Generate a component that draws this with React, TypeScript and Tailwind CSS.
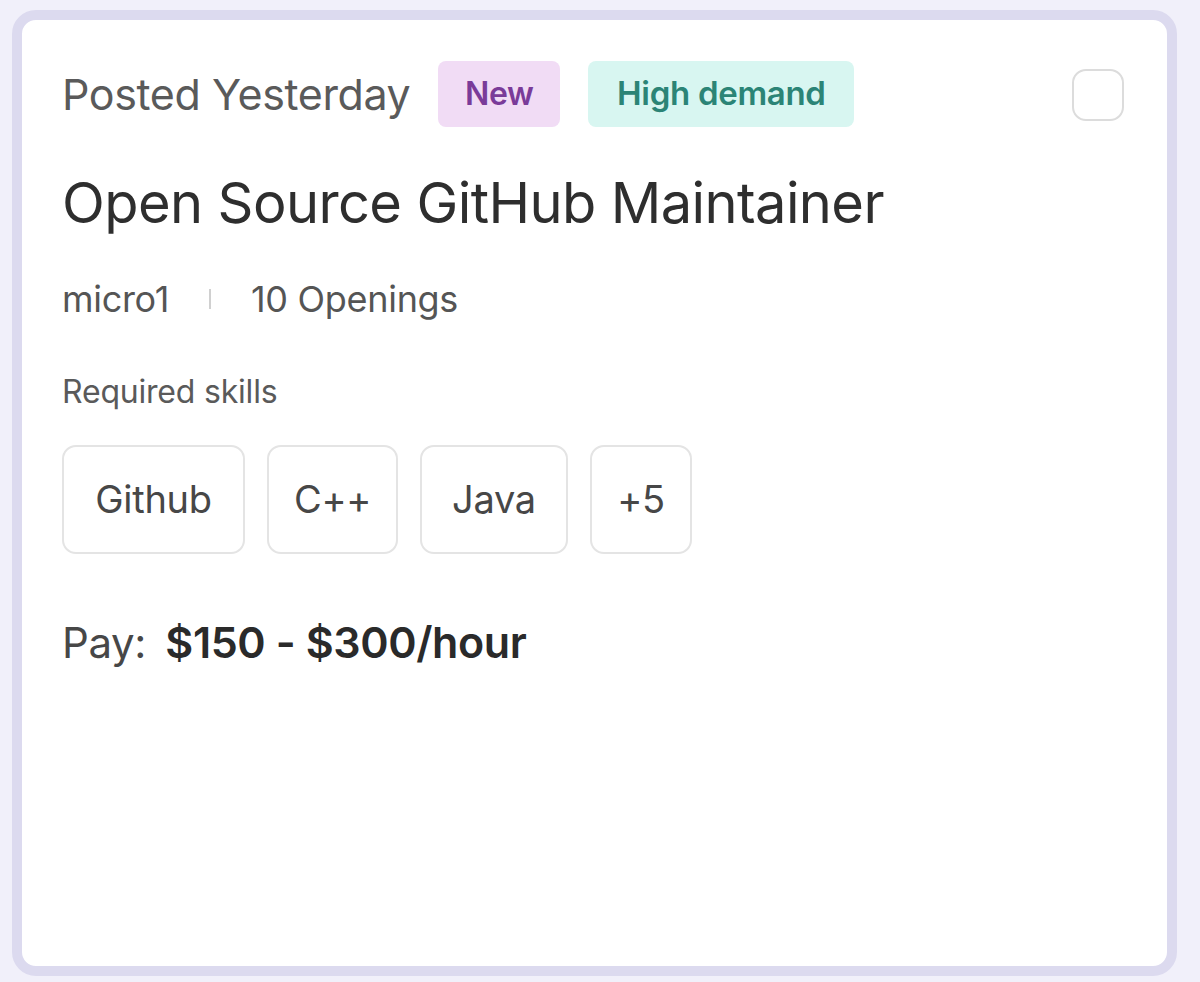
const skills = [
  { label: "Github", w: "w-[183px]" },
  { label: "C++", w: "w-[131px]" },
  { label: "Java", w: "w-[148px]" },
  { label: "+5", w: "w-[102px]" },
];

export default function App() {
  return (
    <div
      className="min-h-screen bg-[#f1f0fa] pt-[10px] pl-[12px] pr-[23px]"
      style={{ fontFamily: "Inter, 'Noto Sans', sans-serif" }}
    >
      <div className="h-[966px] rounded-[24px] border-[10px] border-[#dcdaef] bg-white px-[40px] pt-[41px]">
        <div className="flex items-center justify-between">
          <div className="flex items-center gap-[28px]">
            <span className="text-[43px] leading-none text-[#5a5a5a] tracking-[-0.4px]">
              Posted Yesterday
            </span>
            <span className="flex h-[66px] w-[122px] items-center justify-center rounded-[8px] bg-[#f1dcf5] text-[32px] font-semibold text-[#7a3b99] tracking-[-0.3px]">
              New
            </span>
            <span className="flex h-[66px] w-[266px] items-center justify-center rounded-[8px] bg-[#d8f6f1] text-[33px] font-semibold text-[#2b8476] tracking-[-0.3px]">
              High demand
            </span>
          </div>
          <div className="mr-[3px] mt-[2px] h-[52px] w-[52px] rounded-[14px] border-2 border-[#dcdcdc] bg-white" />
        </div>

        <h1 className="mt-[46px] text-[56px] leading-[60px] font-normal text-[#2e2e2e] tracking-[-0.6px]">
          Open Source GitHub Maintainer
        </h1>

        <div className="mt-[46px] flex items-center text-[36px] leading-[40px] text-[#555555] tracking-[-0.3px]">
          <span>micro1</span>
          <span className="mx-[40px] h-[20px] w-[2px] bg-[#d0d0d0]" />
          <span>10 Openings</span>
        </div>

        <p className="mt-[56px] text-[32px] leading-[34px] text-[#5a5a5a] tracking-[-0.2px]">
          Required skills
        </p>

        <div className="mt-[36px] flex gap-[22px]">
          {skills.map((s) => (
            <div
              key={s.label}
              className={`flex h-[109px] ${s.w} items-center justify-center rounded-[14px] border-2 border-[#e4e4e4] text-[38px] text-[#474747] tracking-[-0.3px]`}
            >
              {s.label}
            </div>
          ))}
        </div>

        <p className="mt-[66px] text-[42px] leading-[44px] text-[#474747] tracking-[-0.4px]">
          Pay:{" "}
          <span className="ml-[8px] text-[43px] font-semibold text-[#2a2a2a]">$150 - $300/hour</span>
        </p>
      </div>
    </div>
  );
}
